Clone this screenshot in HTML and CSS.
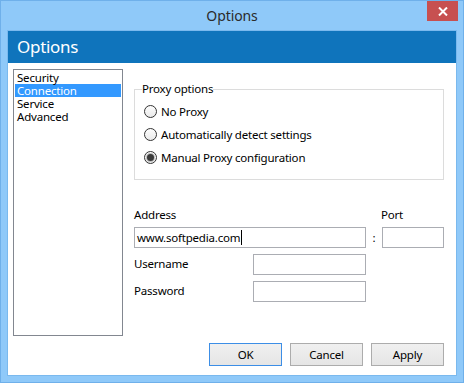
FILE: index.html
```html
<!DOCTYPE html>
<html>
<head>
<meta charset="utf-8">
<link rel="stylesheet" href="styles.css">
</head>
<body>
<div class="window">
  <div class="titlebar">
    <span></span>
    <span class="title">Options</span>
    <button class="close" aria-label="Close">
      <svg width="10" height="9" viewBox="0 0 10 9"><path d="M1 0.5 L9 8.5 M9 0.5 L1 8.5" stroke="#fff" stroke-width="2"/></svg>
    </button>
  </div>
  <div class="client">
    <div class="header">Options</div>
    <div class="body">
      <ul class="listbox">
        <li>Security</li>
        <li class="selected">Connection</li>
        <li>Service</li>
        <li>Advanced</li>
      </ul>
      <div class="panel">
        <fieldset class="group">
          <legend>Proxy options</legend>
          <label class="radio"><span class="dot"></span>No Proxy</label>
          <label class="radio"><span class="dot"></span>Automatically detect settings</label>
          <label class="radio"><span class="dot checked"></span>Manual Proxy configuration</label>
        </fieldset>
        <div class="form">
          <div class="lbl addr-lbl">Address</div>
          <div class="lbl port-lbl">Port</div>
          <div class="field addr">www.softpedia.com<span class="caret"></span></div>
          <div class="colon">:</div>
          <div class="field port"></div>
          <div class="lbl user-lbl">Username</div>
          <div class="field user"></div>
          <div class="lbl pass-lbl">Password</div>
          <div class="field pass"></div>
        </div>
      </div>
      <div class="buttons">
        <button class="btn default">OK</button>
        <button class="btn">Cancel</button>
        <button class="btn">Apply</button>
      </div>
    </div>
  </div>
</div>
</body>
</html>
```

FILE: styles.css
```css
html, body {
  margin: 0;
  padding: 0;
  background: #8fc9f9;
}
body {
  font-family: "Noto Sans", "Open Sans", sans-serif;
  font-size: 11.5px;
  letter-spacing: -0.2px;
  color: #000;
}
.window {
  width: 464px;
  height: 383px;
  box-sizing: border-box;
  border: 1px solid #6fb0ea;
  background: #8fc9f9;
  padding: 0 6px 6px 6px;
  display: flex;
  flex-direction: column;
}
.titlebar {
  height: 29px;
  margin: 0 -6px;
  display: grid;
  grid-template-columns: 1fr auto 1fr;
  align-items: start;
}
.title {
  font-size: 14px;
  line-height: 30px;
  color: #2b2b2b;
  letter-spacing: -0.1px;
}
.close {
  justify-self: end;
  margin-right: 5px;
  width: 31px;
  height: 20px;
  border: 0;
  padding: 0;
  background: #c75050;
  display: flex;
  align-items: center;
  justify-content: center;
}
.client {
  flex: 1;
  border: 1px solid #7ab9ee;
  background: #fff;
  display: flex;
  flex-direction: column;
}
.header {
  height: 32px;
  background: #0f74bc;
  color: #fff;
  font-size: 17px;
  line-height: 31px;
  padding-left: 9px;
  letter-spacing: -0.3px;
}
.body {
  flex: 1;
  display: grid;
  grid-template-columns: 110px 310px;
  grid-template-rows: 267px auto;
  column-gap: 11px;
  padding: 6px 0 0 5px;
}
.listbox {
  margin: 0;
  padding: 1px;
  list-style: none;
  border: 1px solid #828790;
  box-sizing: border-box;
}
.listbox li {
  height: 13px;
  line-height: 13px;
  padding-left: 2px;
}
.listbox li.selected {
  background: #3399ff;
  color: #fff;
}
.panel {
  display: flex;
  flex-direction: column;
}
.group {
  margin: 13px 0 0 0;
  padding: 4px 0 0 9px;
  height: 98px;
  box-sizing: border-box;
  border: 1px solid #dcdcdc;
  min-width: 0;
}
.group legend {
  padding: 0;
  margin-left: -2px;
  line-height: 14px;
}
.radio {
  display: flex;
  align-items: center;
  height: 23px;
}
.dot {
  width: 13px;
  height: 13px;
  box-sizing: border-box;
  border: 1px solid #333;
  border-radius: 50%;
  background: linear-gradient(#fdfdfd, #eaeaea);
  margin-right: 4px;
  display: flex;
  align-items: center;
  justify-content: center;
}
.dot.checked::after {
  content: "";
  width: 7px;
  height: 7px;
  border-radius: 50%;
  background: #3a3a3a;
  box-shadow: 0 0 0 1px #bdbdbd;
}
.form {
  margin-top: 27px;
  display: grid;
  grid-template-columns: 119px 113px 16px 62px;
  grid-template-rows: 20px 27px 27px 21px;
  align-items: start;
}
.lbl {
  line-height: 16px;
}
.addr-lbl { grid-column: 1 / 3; grid-row: 1; }
.port-lbl { grid-column: 4; grid-row: 1; margin-left: -1px; }
.field {
  box-sizing: border-box;
  height: 21px;
  border: 1px solid #abadb3;
  background: #fff;
  padding-left: 2px;
  line-height: 19px;
  display: flex;
  align-items: center;
}
.addr { grid-column: 1 / 3; grid-row: 2; }
.colon { grid-column: 3; grid-row: 2; text-align: center; line-height: 21px; }
.port { grid-column: 4; grid-row: 2; }
.user-lbl { grid-column: 1; grid-row: 3; margin-top: 2px; }
.user { grid-column: 2; grid-row: 3; }
.pass-lbl { grid-column: 1; grid-row: 4; margin-top: 2px; }
.pass { grid-column: 2; grid-row: 4; }
.caret {
  display: inline-block;
  width: 1px;
  height: 15px;
  background: #000;
  margin-left: 1px;
}
.buttons {
  grid-column: 2;
  grid-row: 2;
  margin-top: 7px;
  display: flex;
  justify-content: flex-end;
  gap: 8px;
}
.btn {
  width: 73px;
  height: 23px;
  box-sizing: border-box;
  border: 1px solid #acacac;
  background: linear-gradient(#f0f0f0, #e5e5e5);
  font-family: "Noto Sans", "Open Sans", sans-serif;
  font-size: 11.5px;
  letter-spacing: -0.2px;
  color: #000;
  padding: 0;
}
.btn.default {
  border-color: #3c8ee6;
}
```
